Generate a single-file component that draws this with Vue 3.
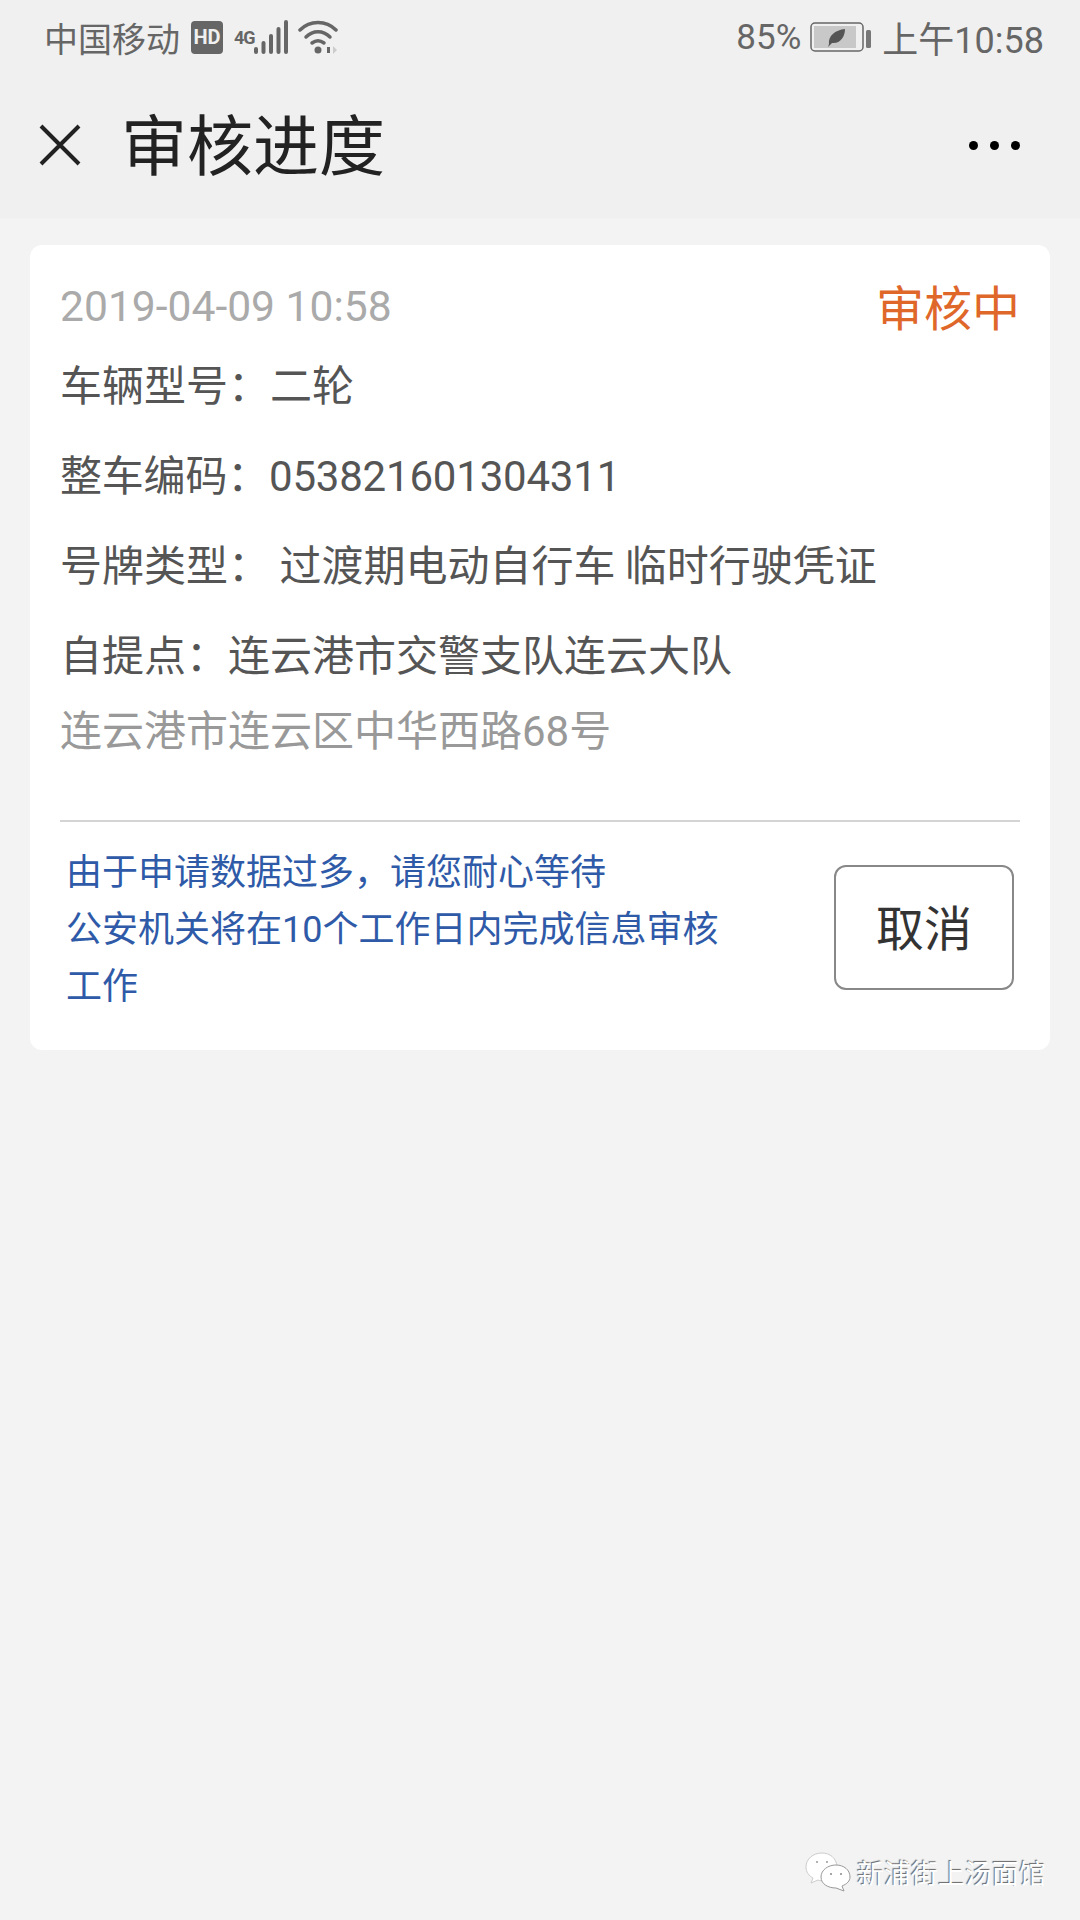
<script setup>
const rows = [
  { label: '车辆型号：', value: '二轮' },
  { label: '整车编码：', value: '053821601304311', cls: 'code' },
  { label: '号牌类型：', value: ' 过渡期电动自行车 临时行驶凭证', cls: 'tight' },
  { label: '自提点：', value: '连云港市交警支队连云大队' }
]
const signalBars = [
  { x: 1, y: 27, h: 7 },
  { x: 8.5, y: 21, h: 13 },
  { x: 16, y: 14, h: 20 },
  { x: 23.5, y: 7, h: 27 },
  { x: 31, y: 0, h: 34 }
]
</script>

<template>
  <div class="page">
    <!-- status bar -->
    <div class="status-bar">
      <div class="status-left">
        <span class="carrier">中国移动</span>
        <span class="hd">HD</span>
        <span class="net">4G</span>
        <svg class="signal" width="36" height="34" viewBox="0 0 36 34">
          <rect v-for="b in signalBars" :key="b.x" :x="b.x" :y="b.y" width="4" :height="b.h" rx="2" fill="#666" />
        </svg>
        <svg class="wifi" width="42" height="36" viewBox="0 0 42 36" fill="none" stroke="#666" stroke-linecap="round">
          <path d="M2 11 C12 1 28 1 38 11" stroke-width="3.5" />
          <path d="M8 18 C15 11 25 11 32 18" stroke-width="3.5" />
          <path d="M14 24 C18 21 22 21 26 24" stroke-width="3.5" />
          <circle cx="20" cy="31" r="3.5" fill="#666" stroke="none" />
          <path d="M29 34 L29 28 L32 28 L32 34 Z" fill="#666" stroke="none" />
          <path d="M35 27 L39 31 L35 35 Z" fill="#ccc" stroke="none" />
        </svg>
      </div>
      <div class="status-right">
        <span>85%</span>
        <svg class="battery" width="62" height="32" viewBox="0 0 62 32">
          <rect x="1" y="2" width="52" height="28" rx="4" fill="none" stroke="#666" stroke-width="1.5" />
          <rect x="4" y="5" width="42" height="22" fill="#c8c8c8" />
          <rect x="56" y="9" width="5" height="18" rx="1.5" fill="#777" />
          <path d="M19 23 C18 15 25 9 35 8 C35 16 30 23 22 22 L18 26 Z" fill="#555" />
        </svg>
        <span class="time">上午10:58</span>
      </div>
    </div>

    <!-- nav -->
    <div class="nav">
      <svg class="close" width="44" height="44" viewBox="0 0 44 44">
        <path d="M3 3 L41 41 M41 3 L3 41" stroke="#222" stroke-width="4" fill="none" />
      </svg>
      <h1 class="title">审核进度</h1>
      <div class="more">
        <i></i><i></i><i></i>
      </div>
    </div>

    <!-- card -->
    <div class="card">
      <div class="card-head">
        <span class="date">2019-04-09 10:58</span>
        <span class="state">审核中</span>
      </div>
      <div v-for="r in rows" :key="r.label" class="row" :class="r.cls">{{ r.label }}{{ r.value }}</div>
      <div class="address">连云港市连云区中华西路68号</div>
      <div class="card-foot">
        <p class="notice">由于申请数据过多，请您耐心等待<br />公安机关将在10个工作日内完成信息审核工作</p>
        <button class="cancel" type="button">取消</button>
      </div>
    </div>

    <!-- watermark -->
    <div class="watermark">
      <svg width="46" height="40" viewBox="0 0 46 40">
        <path d="M17 1 C8 1 1 7 1 15 C1 20 4 24 8 26 L6 31 L13 28 C15 29 18 29 20 28 C30 26 33 20 32 14 C31 6 25 1 17 1 Z" fill="#fff" stroke="#ccc" />
        <path d="M31 13 C23 13 16 18 16 25 C16 32 23 36 31 36 L39 39 L37 34 C42 32 45 29 45 25 C45 18 39 13 31 13 Z" fill="#fff" stroke="#999" />
        <path d="M11 10 h2 M21 10 h2" stroke="#999" stroke-width="1.5" />
        <path d="M25 22 h2 M35 22 h2" stroke="#888" stroke-width="1.5" />
      </svg>
      <span>新浦街上汤面馆</span>
    </div>
  </div>
</template>

<style scoped>
.page {
  position: relative;
  width: 1080px;
  height: 1920px;
  overflow: hidden;
  background: #f3f3f4;
  font-family: Roboto, "Noto Sans CJK SC", sans-serif;
  color: #555;
}

.status-bar {
  height: 74px;
  padding: 0 36px 0 44px;
  display: flex;
  align-items: center;
  justify-content: space-between;
  background: #f0f0f0;
  box-sizing: border-box;
  color: #666;
  font-size: 35px;
}

.status-left,
.status-right {
  display: flex;
  align-items: center;
}

.carrier {
  font-size: 34px;
  margin-right: 11px;
}

.hd {
  width: 32px;
  height: 33px;
  border-radius: 4px;
  background: #666;
  color: #f0f0f0;
  font-size: 20px;
  font-weight: 700;
  line-height: 33px;
  text-align: center;
  margin-right: 11px;
}

.net {
  align-self: flex-start;
  margin-top: 15px;
  font-size: 18px;
  line-height: 20px;
  font-weight: 700;
  width: 19px;
  letter-spacing: -1px;
}

.signal {
  margin-right: 9px;
}

.battery {
  margin: 0 10px 0 9px;
}

.time {
  font-size: 36px;
}

.nav {
  height: 144px;
  padding: 0 44px 0 38px;
  display: flex;
  align-items: center;
  background: #f0f0f0;
}

.close {
  margin: 0 39px 2px 0;
}

.title {
  flex: 1;
  margin: 4px 0 0;
  font-size: 66px;
  font-weight: 400;
  color: #222;
  line-height: 80px;
}

.more {
  display: flex;
  gap: 12px;
  margin: 0 16px 2px 0;
}

.more i {
  width: 9px;
  height: 9px;
  border-radius: 50%;
  background: #000;
}

.card {
  margin: 27px 30px 0;
  padding: 40px 30px 34px;
  background: #fff;
  border-radius: 12px;
  font-size: 42px;
}

.card-head {
  display: flex;
  justify-content: space-between;
  height: 50px;
  margin-bottom: 7px;
}

.date {
  color: #aaa;
  font-size: 42.6px;
  line-height: 42px;
}

.state {
  color: #e0672a;
  font-size: 48px;
  line-height: 50px;
}

.row {
  height: 90px;
  line-height: 90px;
  white-space: pre;
  color: #555;
}

.row.code {
  letter-spacing: -0.2px;
}

.row.tight {
  word-spacing: -1px;
}

.address {
  line-height: 60px;
  color: #999;
}

.card-foot {
  margin-top: 58px;
  padding-top: 22px;
  border-top: 2px solid #d4d4d4;
  display: flex;
  align-items: center;
  justify-content: space-between;
}

.notice {
  width: 660px;
  margin: 1px 0 0 6px;
  font-size: 36px;
  line-height: 57px;
  color: #2f5aa8;
}

.cancel {
  width: 180px;
  height: 125px;
  margin: 0 6px 6px 0;
  padding: 0 0 4px;
  background: #fff;
  border: 2.5px solid #888;
  border-radius: 12px;
  font-family: inherit;
  font-size: 48px;
  color: #333;
}

.watermark {
  position: absolute;
  right: 34px;
  bottom: 28px;
  display: flex;
  align-items: center;
  gap: 6px;
  font-size: 27px;
  color: #fff;
  text-shadow: -1px -1px 1px #666;
}
</style>
